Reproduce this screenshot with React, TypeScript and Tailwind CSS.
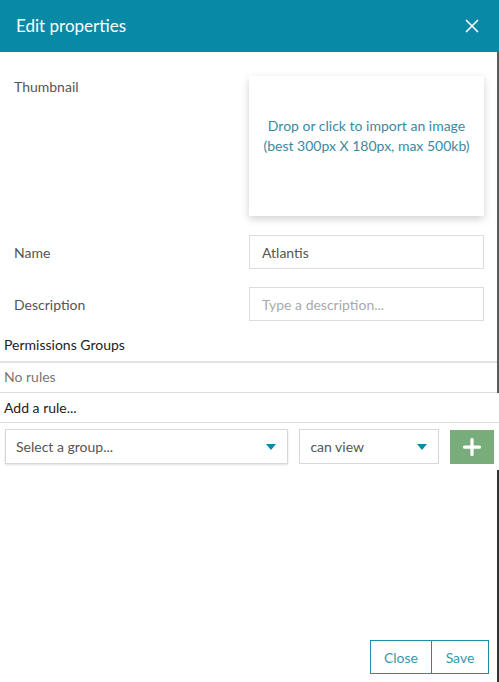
import { X, Plus } from 'lucide-react'

function Caret() {
  return (
    <svg width="10" height="6" viewBox="0 0 10 6" className="shrink-0">
      <path d="M0 0 L10 0 L5 6 Z" fill="#0a8aa6" />
    </svg>
  )
}

export default function App() {
  return (
    <div
      className="w-[499px] h-[682px] bg-white flex flex-col text-[14px] text-[#555]"
      style={{ fontFamily: 'Lato, "Open Sans", sans-serif' }}
    >
      <div className="h-[52px] shrink-0 bg-[#0889a5] flex items-center justify-between pl-4 pr-4">
        <span className="text-white text-[17px]">Edit properties</span>
        <X className="w-[22px] h-[22px] text-white" strokeWidth={1.8} />
      </div>

      <div className="border-r-2 border-[#5a5a5a]">
        <div className="flex pt-6 pr-[13px]">
          <div className="w-[249px] pl-[14px]">Thumbnail</div>
          <div className="flex-1 h-[140px] bg-white shadow-[0_3px_8px_rgba(0,0,0,0.18)] flex items-center justify-center text-center text-[#3c8aa1] leading-[20px] pb-[20px]">
            Drop or click to import an image
            <br />
            (best 300px X 180px, max 500kb)
          </div>
        </div>

        <div className="flex items-center pr-[13px] mt-[19px]">
          <div className="w-[249px] pl-[14px]">Name</div>
          <div className="flex-1 h-[34px] border border-[#dcdcdc] flex items-center px-3 text-[#555]">
            Atlantis
          </div>
        </div>

        <div className="flex items-center pr-[13px] mt-[18px]">
          <div className="w-[249px] pl-[14px]">Description</div>
          <div className="flex-1 h-[34px] border border-[#dcdcdc] flex items-center px-3 text-[#aaa]">
            Type a description...
          </div>
        </div>

        <div className="mt-[12px] px-1 h-[30px] pt-[2px] leading-[20px] text-[#222] border-b-2 border-[#e2e2e2]">
          Permissions Groups
        </div>
        <div className="px-1 h-[30px] pt-[4px] leading-[20px] text-[#777] border-b border-[#dcdcdc]">
          No rules
        </div>
      </div>

      <div className="px-1 h-[30px] pt-[5px] leading-[20px] text-[#222] border-b border-[#dcdcdc]">
        Add a rule...
      </div>

      <div className="flex items-center gap-[11px] px-[5px] mt-[6px]">
        <div className="w-[284px] h-[35px] border border-[#d8d8d8] shadow-[0_1px_2px_rgba(0,0,0,0.12)] flex items-center justify-between pl-[10px] pr-[11px]">
          <span>Select a group...</span>
          <Caret />
        </div>
        <div className="w-[140px] h-[35px] border border-[#d8d8d8] flex items-center justify-between pl-[10px] pr-[11px]">
          <span>can view</span>
          <Caret />
        </div>
        <div className="w-[44px] h-[34px] bg-[#79ac7b] flex items-center justify-center">
          <Plus className="w-[26px] h-[26px] text-white" strokeWidth={3} />
        </div>
      </div>

      <div className="flex-1 flex items-end justify-end pr-[8px] pb-[8px] border-r-2 border-[#333] mt-[6px]">
        <div className="flex h-[34px] border border-[#1a8fa6] text-[#3a97ab]">
          <div className="w-[61px] flex items-center justify-center border-r border-[#1a8fa6]">Close</div>
          <div className="w-[56px] flex items-center justify-center">Save</div>
        </div>
      </div>
    </div>
  )
}
